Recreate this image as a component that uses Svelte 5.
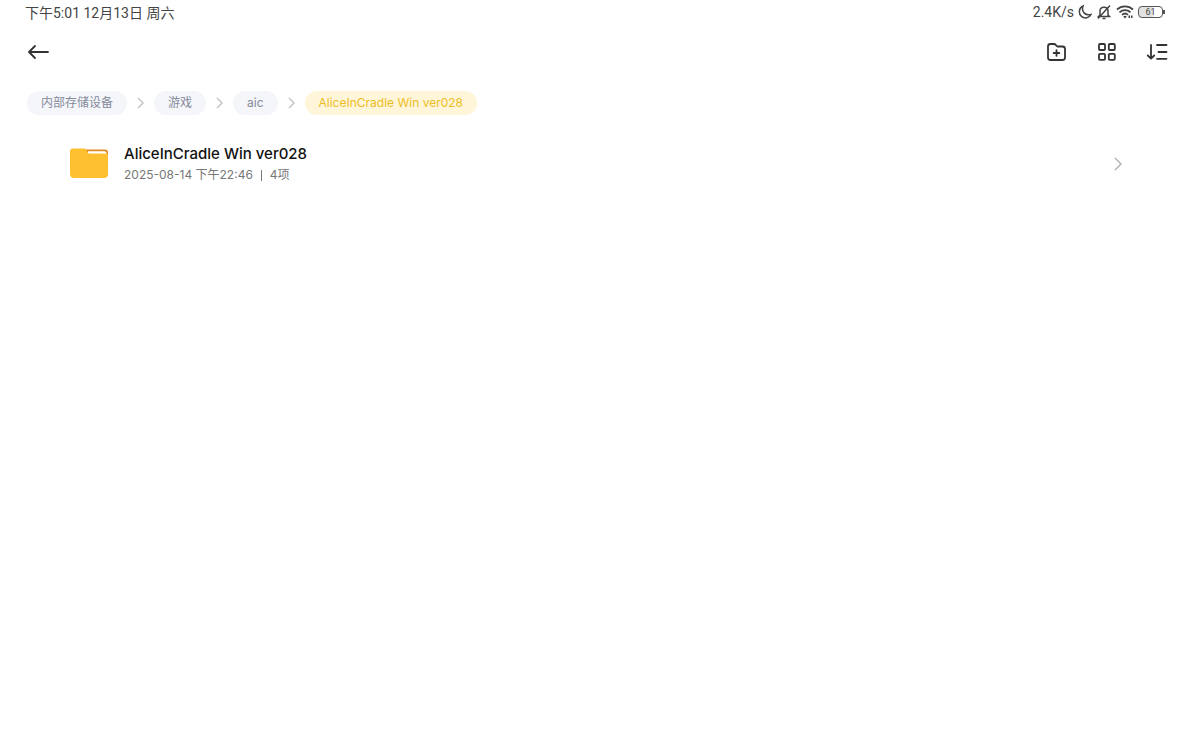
<script lang="ts">
	const crumbs = ['内部存储设备', '游戏', 'aic', 'AliceInCradle Win ver028'];

	const folders = [
		{ name: 'AliceInCradle Win ver028', modified: '2025-08-14 下午22:46', count: 4 }
	];

	let selected = $state(crumbs.length - 1);
</script>

<header class="status">
	<span>下午5:01 12月13日 周六</span>
	<div class="indicators">
		<span>2.4K/s</span>
		<svg width="14" height="16" viewBox="0 0 14 16">
			<path d="M5 2C.5 4 .4 10 3.5 12.400C6.500 15 11.500 14 13 10.500C7 12 3.200 7.500 5 2Z" />
		</svg>
		<svg width="16" height="16" viewBox="0 0 16 16">
			<path d="M4 11V7c0-5 8-5 8 0v4l1.500 1.500h-11zM6.500 14.500h3M14 1.500 2 14.500" />
		</svg>
		<svg class="wifi" width="18" height="16" viewBox="0 0 18 16">
			<path d="M1 5.500c4.500-4.200 11.500-4.200 16 0M3.500 8.300c3.200-3 7.800-3 11 0M6 10.900c2-1.800 4-1.800 6 0" />
			<path class="solid" d="M7.200 12.400q1.800-1.400 3.600 0L9 14.500zM12.500 11.500H14v2.500h-1.500zM15 11.500h1.500V14H15z" />
		</svg>
		<span class="battery"><span class="cell">61</span></span>
	</div>
</header>

<nav class="toolbar">
	<button aria-label="返回">
		<svg width="22" height="22" viewBox="0 0 22 22">
			<path d="M21 11H2M8 5 2 11l6 6" />
		</svg>
	</button>
	<div class="actions">
		<button aria-label="新建文件夹">
			<svg width="22" height="22" viewBox="0 0 22 22">
				<path d="M2 5.500q0-2.500 2.500-2.500h3.500q1 0 1.700.8l1.600 1.700H16.500q2.500 0 2.500 2.500v8.500q0 2.500-2.500 2.500H4.500q-2.500 0-2.500-2.500zM10.500 9.200v5.600M7.700 12h5.600" />
			</svg>
		</button>
		<button aria-label="网格视图">
			<svg width="22" height="22" viewBox="0 0 22 22">
				<rect x="3" y="3" width="6" height="6" rx="1" />
				<rect x="12.800" y="3" width="6" height="6" rx="1" />
				<rect x="3" y="12.800" width="6" height="6" rx="1" />
				<rect x="12.800" y="12.800" width="6" height="6" rx="1" />
			</svg>
		</button>
		<button aria-label="排序">
			<svg width="22" height="22" viewBox="0 0 22 22">
				<path d="M5 4v13.500M1.800 14.500 5 17.700l3.200-3.200M11 4h9.500M12.500 11h8M11 17.800h9.500" />
			</svg>
		</button>
	</div>
</nav>

<nav class="crumbs">
	{#each crumbs as crumb, i}
		{#if i > 0}
			<svg width="7" height="12" viewBox="0 0 7 12"><path d="M1 1l5 5-5 5" /></svg>
		{/if}
		<button class="crumb" class:current={selected === i} onclick={() => (selected = i)}>
			{crumb}
		</button>
	{/each}
</nav>

<main>
	{#each folders as folder}
		<a class="folder" href="#folder">
			<svg width="38" height="32" viewBox="0 0 38 32">
				<path fill="#e08a20" d="M14 1.500h21q3 0 3 3v10H14z" />
				<path fill="#fff" d="M18 3.200h16.500q2 0 2 2V10H18z" />
				<path fill="#ffc02f" d="M0 3.500q0-3 3-3h11q1.500 0 2.300 1.300L17.500 4q.7 1.500 2.200 1.500H35q3 0 3 2V26q0 4-4 4H4q-4 0-4-4z" />
			</svg>
			<div class="info">
				<span class="name">{folder.name}</span>
				<span class="meta">{folder.modified}<i></i>{folder.count}项</span>
			</div>
			<svg class="chevron" width="10" height="14" viewBox="0 0 10 14"><path d="M1 1l6 6-6 6" /></svg>
		</a>
	{/each}
</main>

<style>
	:global(body) {
		background: #fff;
		font-family: Inter, 'Noto Sans CJK SC', sans-serif;
	}

	button {
		border: none;
		background: none;
		padding: 0;
		font: inherit;
		cursor: pointer;
	}

	svg {
		display: block;
		flex: none;
	}

	.status {
		display: flex;
		justify-content: space-between;
		align-items: center;
		height: 24px;
		padding: 0 27px 0 25px;
		font-family: Roboto, 'Noto Sans CJK SC', sans-serif;
		font-size: 14px;
		color: #444;
	}

	.indicators {
		display: flex;
		align-items: center;
		gap: 4px;
	}

	.indicators svg {
		fill: none;
		stroke: #444;
		stroke-width: 1.5;
	}

	.indicators .wifi {
		stroke-width: 1.8;
	}

	.indicators .solid {
		fill: #444;
		stroke: none;
	}

	.battery {
		display: flex;
		align-items: center;
	}

	.battery::after {
		content: '';
		width: 2px;
		height: 4px;
		background: #555;
	}

	.cell {
		box-sizing: border-box;
		width: 25px;
		height: 12px;
		border: 1px solid #555;
		border-radius: 4px;
		background: linear-gradient(90deg, #e2e2e2 61%, #fff 61%);
		font-size: 9px;
		line-height: 10px;
		text-align: center;
	}

	.toolbar {
		display: flex;
		justify-content: space-between;
		align-items: center;
		height: 56px;
		padding: 0 24px 0 27px;
	}

	.toolbar svg {
		fill: none;
		stroke: #333;
		stroke-width: 1.8;
		stroke-linecap: round;
		stroke-linejoin: round;
	}

	.actions {
		display: flex;
		gap: 28px;
	}

	.crumbs {
		display: flex;
		align-items: center;
		gap: 10px;
		padding: 11px 27px;
	}

	.crumbs svg {
		fill: none;
		stroke: #c4c4c4;
		stroke-width: 1.5;
	}

	.crumb {
		height: 24px;
		padding: 0 14px;
		border-radius: 12px;
		background: #f4f6fa;
		color: #858a9a;
		font-size: 12px;
		line-height: 24px;
		white-space: nowrap;
	}

	.crumb.current {
		background: #fff5d8;
		color: #eebd26;
	}

	.folder {
		display: flex;
		align-items: center;
		gap: 16px;
		padding: 17px 68px 16px 70px;
		text-decoration: none;
	}

	.info {
		display: flex;
		flex: 1;
		flex-direction: column;
	}

	.name {
		font-size: 15px;
		font-weight: 500;
		line-height: 22px;
		color: #111;
	}

	.meta {
		display: flex;
		align-items: center;
		font-size: 12px;
		line-height: 20px;
		color: #777;
	}

	.meta i {
		width: 1px;
		height: 11px;
		margin: 0 8px;
		background: #777;
	}

	.chevron {
		fill: none;
		stroke: #aaa;
		stroke-width: 1.3;
	}
</style>
